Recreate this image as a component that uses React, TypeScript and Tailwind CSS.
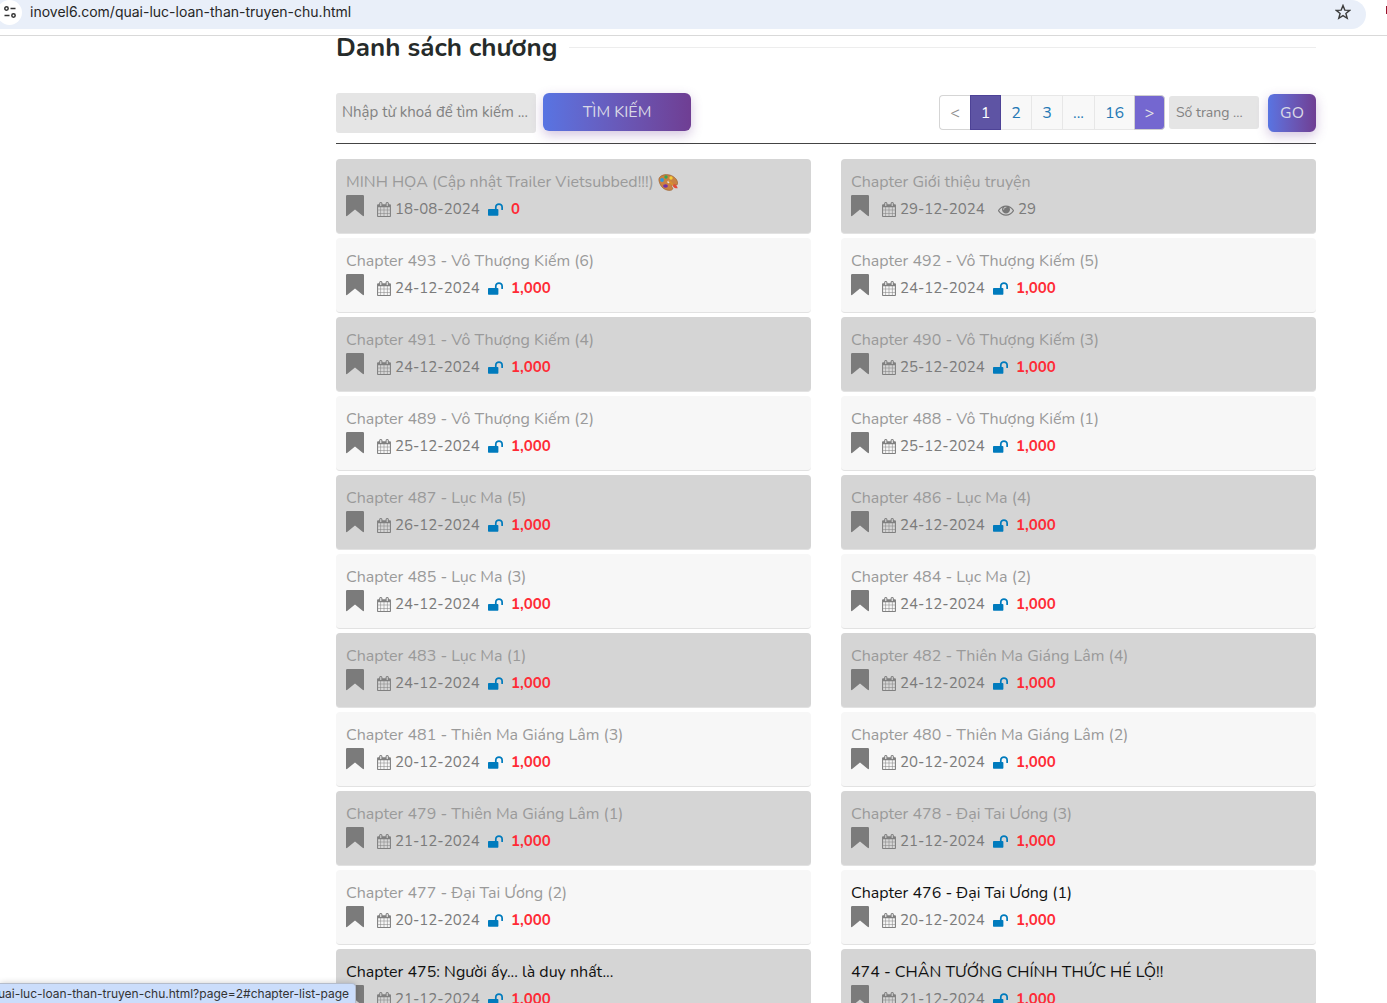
import React from 'react';

type Chapter = {
  title: string;
  date: string;
  price?: string;
  views?: string;
  art?: boolean;
  unread?: boolean;
};

const CHAPTERS: Chapter[] = [
  { title: 'MINH HỌA (Cập nhật Trailer Vietsubbed!!!)', date: '18-08-2024', price: '0', art: true },
  { title: 'Chapter Giới thiệu truyện', date: '29-12-2024', views: '29' },
  { title: 'Chapter 493 - Vô Thượng Kiếm (6)', date: '24-12-2024', price: '1,000' },
  { title: 'Chapter 492 - Vô Thượng Kiếm (5)', date: '24-12-2024', price: '1,000' },
  { title: 'Chapter 491 - Vô Thượng Kiếm (4)', date: '24-12-2024', price: '1,000' },
  { title: 'Chapter 490 - Vô Thượng Kiếm (3)', date: '25-12-2024', price: '1,000' },
  { title: 'Chapter 489 - Vô Thượng Kiếm (2)', date: '25-12-2024', price: '1,000' },
  { title: 'Chapter 488 - Vô Thượng Kiếm (1)', date: '25-12-2024', price: '1,000' },
  { title: 'Chapter 487 - Lục Ma (5)', date: '26-12-2024', price: '1,000' },
  { title: 'Chapter 486 - Lục Ma (4)', date: '24-12-2024', price: '1,000' },
  { title: 'Chapter 485 - Lục Ma (3)', date: '24-12-2024', price: '1,000' },
  { title: 'Chapter 484 - Lục Ma (2)', date: '24-12-2024', price: '1,000' },
  { title: 'Chapter 483 - Lục Ma (1)', date: '24-12-2024', price: '1,000' },
  { title: 'Chapter 482 - Thiên Ma Giáng Lâm (4)', date: '24-12-2024', price: '1,000' },
  { title: 'Chapter 481 - Thiên Ma Giáng Lâm (3)', date: '20-12-2024', price: '1,000' },
  { title: 'Chapter 480 - Thiên Ma Giáng Lâm (2)', date: '20-12-2024', price: '1,000' },
  { title: 'Chapter 479 - Thiên Ma Giáng Lâm (1)', date: '21-12-2024', price: '1,000' },
  { title: 'Chapter 478 - Đại Tai Ương (3)', date: '21-12-2024', price: '1,000' },
  { title: 'Chapter 477 - Đại Tai Ương (2)', date: '20-12-2024', price: '1,000' },
  { title: 'Chapter 476 - Đại Tai Ương (1)', date: '20-12-2024', price: '1,000', unread: true },
  { title: 'Chapter 475: Người ấy... là duy nhất...', date: '21-12-2024', price: '1,000', unread: true },
  { title: '474 - CHÂN TƯỚNG CHÍNH THỨC HÉ LỘ!!', date: '21-12-2024', price: '1,000', unread: true },
];

const BookmarkIcon = () => (
  <svg viewBox="0 0 18 22" className="w-[18px] h-[22px] fill-[#7b7b7b]" aria-hidden="true">
    <path d="M1.2 0h15.6Q18 0 18 1.2v19q0 1.6-1.4.6L9 14.4l-7.6 6.4Q0 21.8 0 20.2v-19Q0 0 1.2 0z" />
  </svg>
);

const CalendarIcon = () => (
  <svg viewBox="64 0 1664 1792" className="w-[14px] h-[15px] shrink-0 fill-[#808080]" aria-hidden="true">
    <path d="M192 1664h288v-288h-288v288zm352 0h320v-288h-320v288zm-352-352h288v-320h-288v320zm352 0h320v-320h-320v320zm-352-384h288v-288h-288v288zm736 736h320v-288h-320v288zm-384-736h320v-288h-320v288zm768 736h288v-288h-288v288zm-384-352h320v-320h-320v320zm-352-864v-288q0-13-9.5-22.5t-22.5-9.5h-64q-13 0-22.5 9.5t-9.5 22.5v288q0 13 9.5 22.5t22.5 9.5h64q13 0 22.5-9.5t9.5-22.5zm736 864h288v-320h-288v320zm-384-384h320v-288h-320v288zm384 0h288v-288h-288v288zm32-480v-288q0-13-9.5-22.5t-22.5-9.5h-64q-13 0-22.5 9.5t-9.5 22.5v288q0 13 9.5 22.5t22.5 9.5h64q13 0 22.5-9.5t9.5-22.5zm384-64v1280q0 52-38 90t-90 38h-1408q-52 0-90-38t-38-90v-1280q0-52 38-90t90-38h128v-96q0-66 47-113t113-47h64q66 0 113 47t47 113v96h384v-96q0-66 47-113t113-47h64q66 0 113 47t47 113v96h128q52 0 90 38t38 90z" />
  </svg>
);

const UnlockIcon = () => (
  <svg viewBox="64 128 1664 1408" className="ml-2 w-[15px] h-[13px] shrink-0 fill-[#007bbd]" aria-hidden="true">
    <path d="M1728 576v256q0 26-19 45t-45 19h-64q-26 0-45-19t-19-45v-256q0-106-75-181t-181-75-181 75-75 181v192h96q40 0 68 28t28 68v576q0 40-28 68t-68 28h-960q-40 0-68-28t-28-68v-576q0-40 28-68t68-28h672v-192q0-185 131.5-316.5t316.5-131.5 316.5 131.5 131.5 316.5z" />
  </svg>
);

const EyeIcon = () => (
  <svg viewBox="0 0 1792 1792" className="ml-[13px] size-4 shrink-0 fill-[#777777]" aria-hidden="true">
    <path d="M1664 960q-152-236-381-353 61 104 61 225 0 185-131.5 316.5t-316.5 131.5-316.5-131.5-131.5-316.5q0-121 61-225-229 117-381 353 133 205 333.5 326.5t434.5 121.5 434.5-121.5 333.5-326.5zm-720-384q0-20-14-34t-34-14q-125 0-214.5 89.5t-89.5 214.5q0 20 14 34t34 14 34-14 14-34q0-86 61-147t147-61q20 0 34-14t14-34zm848 384q0 34-20 69-140 230-376.5 368.5t-499.5 138.5-499.5-139-376.5-368q-20-35-20-69t20-69q140-229 376.5-368t499.5-139 499.5 139 376.5 368q20 35 20 69z" />
  </svg>
);

const PaletteIcon = () => (
  <svg viewBox="0 0 20 17" className="w-5 h-[17px]" aria-hidden="true">
    <path d="M1 7C0 3 4 .6 8.500.6c5 0 9.500 3 10.800 6.700 1 3-.2 4.200-2 3.700-1.700-.5-3.400-.6-3.600.8-.2 1.200 1.500 2 1 3.300-.6 1.600-4.200 1.700-7 .6C4 14.300 1.700 10.500 1 7z" fill="#c98243" stroke="#99602f" strokeWidth=".6" />
    <circle cx="4" cy="6" r="1.900" fill="#2b9ce0" />
    <circle cx="8" cy="3" r="1.700" fill="#35a853" />
    <circle cx="13" cy="4" r="1.700" fill="#f4cd3a" />
    <ellipse cx="7.500" cy="12" rx="2.400" ry="1.700" fill="#7130a8" />
    <circle cx="10.500" cy="8" r="1.200" fill="#e3e3e3" />
    <path d="M10 7l2-.4 6.500 6.600-1.300 1z" fill="#d9902f" />
    <path d="M15.500 10.200c1.800-.4 3.700 1.400 4.200 4-1.800.4-3.700-.4-4.700-2z" fill="#e34a3c" />
  </svg>
);

const ChapterCard = ({ chapter, shaded }: { chapter: Chapter; shaded: boolean }) => (
  <li
    className={`rounded-[4px] border-b border-[#e2e2e2] px-[10px] pt-[10px] pb-[9px] ${shaded ? 'bg-[#d5d5d5]' : 'bg-[#f7f7f7]'}`}
  >
    <a
      href="#chapter"
      className={`flex items-center gap-1 h-[26px] whitespace-nowrap ${chapter.unread ? 'text-[#111111]' : 'text-[#9a9a9a]'}`}
    >
      <span>{chapter.title}</span>
      {chapter.art && <PaletteIcon />}
    </a>
    <div className="flex items-center h-[29px] text-[15px] text-[#7b7b7b]">
      <button type="button" aria-label="Đánh dấu" className="mr-[13px] pb-2 cursor-pointer">
        <BookmarkIcon />
      </button>
      <CalendarIcon />
      <span className="ml-1 w-[85px] whitespace-nowrap">{chapter.date}</span>
      {chapter.price && (
        <>
          <UnlockIcon />
          <span className="ml-2 font-bold text-[#ff2a35]">{chapter.price}</span>
        </>
      )}
      {chapter.views && (
        <>
          <EyeIcon />
          <span className="ml-1">{chapter.views}</span>
        </>
      )}
    </div>
  </li>
);

const AddressBar = () => (
  <header className="flex items-start justify-between h-9 border-b border-[#d9d9d9] bg-white overflow-hidden">
    <div className="flex flex-1 items-center h-[29px] pb-[5px] pr-[15px] rounded-r-full bg-[#e9eff9]">
      <button type="button" aria-label="Thông tin trang" className="flex items-center justify-center -ml-[3px] size-[25px] rounded-full bg-white">
        <svg viewBox="0 0 14 14" className="size-[14px]" fill="none" stroke="#333333" strokeWidth="1.500" aria-hidden="true">
          <circle cx="3.500" cy="3.500" r="1.700" />
          <path d="M7.500 3.500h5M1.500 10.500h5" />
          <circle cx="10.500" cy="10.500" r="1.700" />
        </svg>
      </button>
      <span className="ml-2 flex-1 font-[Inter] text-sm text-[#262626]">inovel6.com/quai-luc-loan-than-truyen-chu.html</span>
      <button type="button" aria-label="Thêm dấu trang">
        <svg viewBox="0 0 16 16" className="size-4" fill="none" stroke="#3c3c3c" strokeWidth="1.400" aria-hidden="true">
          <path d="M8 1.500l1.800 4.600 4.900.3-3.800 3.100 1.300 4.800L8 11.600l-4.200 2.700 1.300-4.800L1.300 6.400l4.900-.3z" />
        </svg>
      </button>
    </div>
    <div className="flex w-[21px] justify-end pt-[6px]">
      <span className="w-px h-2 bg-[#99152e]" />
    </div>
  </header>
);

const Pagination = () => (
  <nav aria-label="Trang" className="flex h-[35px] text-[#2478b5]">
    <a href="#prev" className="flex items-center justify-center w-[31px] rounded-l-[4px] border border-r-0 border-[#d5d5d5] bg-white text-[#909090]">&lt;</a>
    <a href="#p1" aria-current="page" className="flex items-center justify-center w-[31px] border border-[#4d4296] bg-[#5e54a4] text-white">1</a>
    <a href="#p2" className="flex items-center justify-center w-[31px] border-y border-r border-[#e7e7e7] bg-[#f8f8f8]">2</a>
    <a href="#p3" className="flex items-center justify-center w-[31px] border-y border-r border-[#e7e7e7] bg-[#f8f8f8]">3</a>
    <span className="flex items-center justify-center w-8 border-y border-r border-[#e7e7e7] bg-[#f8f8f8]">...</span>
    <a href="#p16" className="flex items-center justify-center w-[39px] border-y border-[#e7e7e7] bg-[#f8f8f8]">16</a>
    <a href="#next" className="flex items-center justify-center w-[31px] rounded-r-[4px] border border-[#cfcfcf] bg-[#7467d0] text-[#e4e4e4]">&gt;</a>
  </nav>
);

export default function App() {
  return (
    <div className="relative h-screen overflow-hidden bg-white font-['Nunito','Open_Sans',sans-serif] text-base">
      <AddressBar />

      <main className="pl-[336px] pr-[71px]">
        <div className="flex items-center gap-3 h-[23px]">
          <h1 className="text-[26px] leading-6 font-bold text-[#262b2a]">Danh sách chương</h1>
          <span className="flex-1 h-px bg-[#ededed]" />
        </div>

        {/* Search and page jump */}
        <div className="flex items-start justify-between mt-[34px] pb-[10px] border-b border-[#444444]">
          <form className="flex gap-[7px]" onSubmit={(e) => e.preventDefault()}>
            <input
              type="text"
              aria-label="Từ khoá"
              placeholder="Nhập từ khoá để tìm kiếm ..."
              className="w-[200px] h-10 px-[6px] pb-[2px] rounded-[3px] bg-[#e5e5e5] text-[15px] placeholder:text-[#828282]"
            />
            <button type="submit" className="w-[148px] h-[38px] rounded-[6px] bg-gradient-to-r from-[#5874e2] to-[#6f3e93] text-[#d9d9e6] shadow-[0_4px_12px_rgba(110,60,150,0.3)]">
              TÌM KIẾM
            </button>
          </form>
          <form className="flex items-center h-[39px]" onSubmit={(e) => e.preventDefault()}>
            <Pagination />
            <input
              type="text"
              aria-label="Số trang"
              placeholder="Số trang ..."
              className="ml-1 w-[90px] h-[33px] px-[7px] rounded-[3px] bg-[#e5e5e5] text-sm placeholder:text-[#828282]"
            />
            <button type="submit" className="ml-[9px] w-12 h-[38px] rounded-[6px] bg-gradient-to-r from-[#5874e2] to-[#6f3e93] text-[#d9d9e6] shadow-[0_4px_12px_rgba(110,60,150,0.3)]">
              GO
            </button>
          </form>
        </div>

        {/* Chapter list */}
        <ul className="grid grid-cols-2 gap-x-[30px] gap-y-1 mt-[15px]">
          {CHAPTERS.map((chapter, i) => (
            <ChapterCard key={chapter.title} chapter={chapter} shaded={Math.floor(i / 2) % 2 === 0} />
          ))}
        </ul>
      </main>

      {/* Link status bubble */}
      <div className="absolute bottom-0 left-0 flex items-center justify-end w-[356px] h-5 pr-[6px] overflow-hidden rounded-tr-[4px] border-t border-r border-[#b4bccb] bg-[#cbddfb] font-[Inter] text-xs text-[#333333] whitespace-nowrap shadow-[0_0_6px_rgba(0,0,0,0.2)]">
        uai-luc-loan-than-truyen-chu.html?page=2#chapter-list-page
      </div>
    </div>
  );
}
